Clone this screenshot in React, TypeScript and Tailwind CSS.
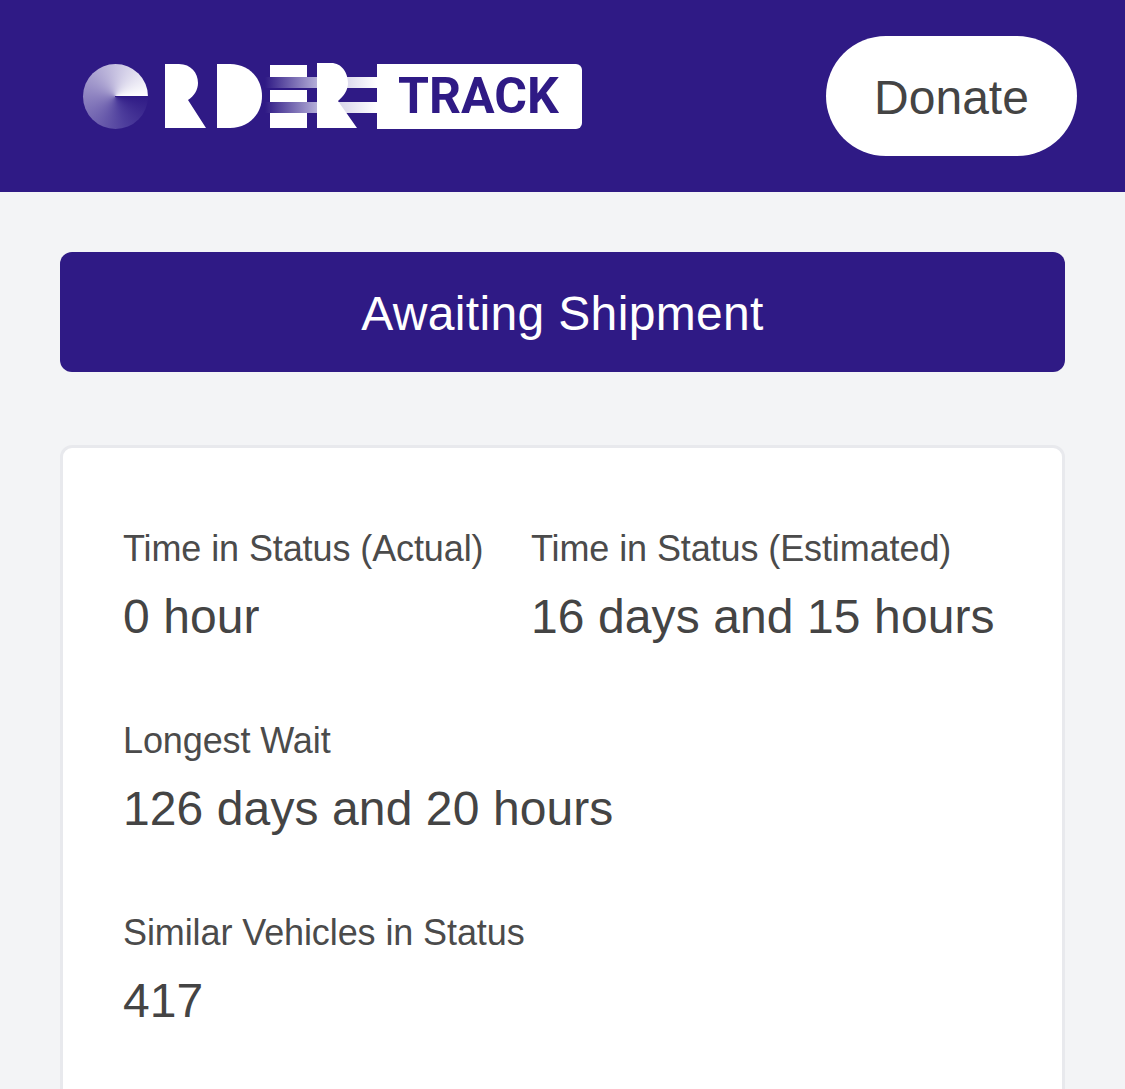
import React from 'react';

const fontStack = 'font-["Liberation_Sans",Arial,sans-serif]';

const OrderLogo: React.FC = () => (
  <div className="flex items-center">
    <div className="w-[65px] h-[65px] rounded-full bg-[conic-gradient(from_90deg,#2f1a85_0deg,#4d3d9c_70deg,#8d82c0_180deg,#d4d0e8_290deg,#ffffff_360deg)]" />
    <svg width="212" height="66" viewBox="0 0 212 66" className="ml-[17px]">
      <defs>
        <linearGradient id="barFade" x1="0" x2="1" y1="0" y2="0">
          <stop offset="0" stopColor="#2f1a85" />
          <stop offset="1" stopColor="#b4aed8" />
        </linearGradient>
        <linearGradient id="barFadeLight" x1="0" x2="1" y1="0" y2="0">
          <stop offset="0" stopColor="#d6d3e9" />
          <stop offset="1" stopColor="#ffffff" />
        </linearGradient>
      </defs>
      {/* R */}
      <path d="M0 1H14C26 1 33 10 33 20C33 27 29 33 23 37L41 65H0Z" fill="#fff" />
      {/* D */}
      <path d="M52 1H65C84 1 97 15 97 33C97 51 84 65 65 65H52Z" fill="#fff" />
      {/* E */}
      <rect x="100" y="14" width="52" height="11" fill="url(#barFade)" />
      <rect x="100" y="39" width="52" height="11" fill="url(#barFade)" />
      <rect x="105" y="2" width="37" height="12" fill="#fff" />
      <rect x="105" y="27" width="37" height="12" fill="#fff" />
      <rect x="105" y="50" width="37" height="15" fill="#fff" />
      {/* second R, with the bars running into the badge */}
      <rect x="176" y="14" width="36" height="11" fill="url(#barFadeLight)" />
      <rect x="172" y="39" width="40" height="11" fill="url(#barFadeLight)" />
      <path d="M152 0H166C177 0 183 10 183 20C183 27 179 33 173 38L192 65H152Z" fill="#fff" />
    </svg>
    <div className="w-[205px] h-[65px] bg-white rounded-r-[6px] flex items-center pl-[21px]">
      <span className='font-["Roboto",sans-serif] font-bold text-[50px] leading-none text-[#2f1a85]'>TRACK</span>
    </div>
  </div>
);

const Stat: React.FC<{ label: string; value: string }> = ({ label, value }) => (
  <div>
    <div className="text-[36px] leading-[48px] tracking-[-0.1px] text-[#4b4b4b] whitespace-nowrap">{label}</div>
    <div className="mt-[20px] text-[48px] leading-[48px] tracking-[0.1px] text-[#444444] whitespace-nowrap">{value}</div>
  </div>
);

export default function App() {
  return (
    <div className={`h-screen overflow-hidden bg-[#f3f4f6] ${fontStack}`}>
      <header className="h-[192px] bg-[#2f1a85] flex items-center justify-between pl-[83px] pr-[48px]">
        <OrderLogo />
        <button className="w-[251px] h-[120px] pt-[4px] rounded-[60px] bg-white text-[48px] text-[#444444]">Donate</button>
      </header>

      <main className="px-[60px] pt-[60px]">
        <div className="h-[120px] pt-[4px] rounded-[12px] bg-[#2f1a85] flex items-center justify-center text-[48px] tracking-[0.35px] text-white">
          Awaiting Shipment
        </div>

        <section className="mt-[73px] rounded-[12px] border-[3px] border-[#e8e9ed] bg-white pl-[60px] pt-[77px] pb-[120px]">
          <div className="flex">
            <div className="w-[408px]">
              <Stat label="Time in Status (Actual)" value="0 hour" />
            </div>
            <Stat label="Time in Status (Estimated)" value="16 days and 15 hours" />
          </div>
          <div className="mt-[76px]">
            <Stat label="Longest Wait" value="126 days and 20 hours" />
          </div>
          <div className="mt-[76px]">
            <Stat label="Similar Vehicles in Status" value="417" />
          </div>
        </section>
      </main>
    </div>
  );
}
